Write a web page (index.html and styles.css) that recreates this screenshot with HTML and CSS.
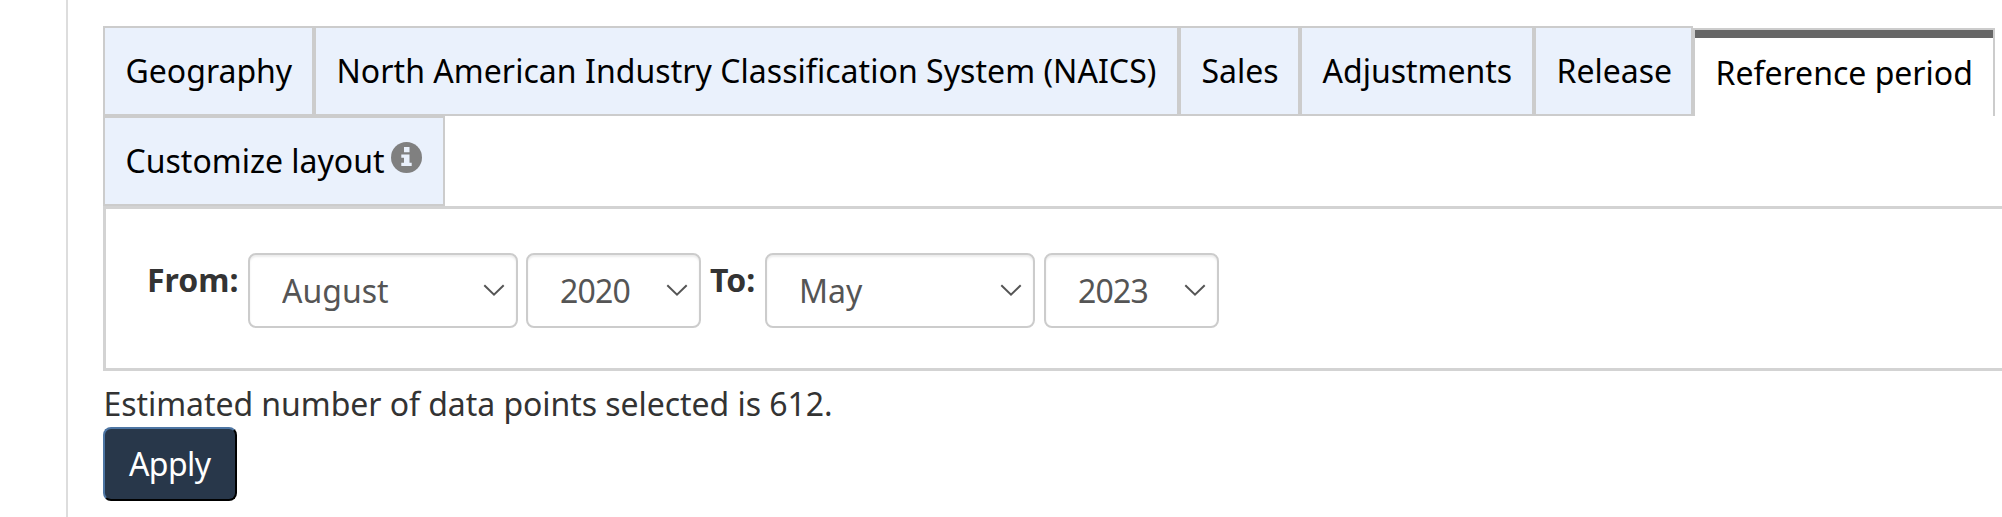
FILE: index.html
```html
<!DOCTYPE html>
<html lang="en">
<head>
<meta charset="utf-8">
<title>Reference period</title>
<link rel="stylesheet" href="styles.css">
</head>
<body>
<main class="page">
  <ul class="tabs">
    <li class="tab tab-geography"><span>Geography</span></li>
    <li class="tab tab-naics"><span>North American Industry Classification System (NAICS)</span></li>
    <li class="tab tab-sales"><span>Sales</span></li>
    <li class="tab tab-adjustments"><span>Adjustments</span></li>
    <li class="tab tab-release"><span>Release</span></li>
    <li class="tab tab-period active"><span>Reference period</span></li>
    <li class="tab tab-layout"><span>Customize layout</span>
      <svg class="info" viewBox="0 0 31 31"><circle cx="15.5" cy="15.5" r="15.5" fill="#808080"/><path fill="#eaf1fc" d="M13 5h5.500v5.300H13zM10.300 12.500h8.200v8.200h2.200v3.200H10.300v-3.200h2.700v-5h-2.700z"/></svg>
    </li>
  </ul>
  <section class="panel">
    <label class="label-from" for="fm">From:</label>
    <span class="field month"><select id="fm"><option>August</option></select><svg class="chevron" viewBox="0 0 22 13"><path d="M1.300 1.300 11 10.700l9.700-9.400"/></svg></span>
    <span class="field year"><select><option>2020</option></select><svg class="chevron" viewBox="0 0 22 13"><path d="M1.300 1.300 11 10.700l9.700-9.400"/></svg></span>
    <label class="label-to" for="tm">To:</label>
    <span class="field month to-month"><select id="tm"><option>May</option></select><svg class="chevron" viewBox="0 0 22 13"><path d="M1.300 1.300 11 10.700l9.700-9.400"/></svg></span>
    <span class="field year"><select><option>2023</option></select><svg class="chevron" viewBox="0 0 22 13"><path d="M1.300 1.300 11 10.700l9.700-9.400"/></svg></span>
  </section>
  <p class="estimate">Estimated number of data points selected is 612.</p>
  <button class="apply">Apply</button>
</main>
</body>
</html>
```
FILE: styles.css
```css
* { box-sizing: border-box; }
body {
  margin: 0;
  background: #fff;
  color: #333;
  font: 32px/44px "Noto Sans", sans-serif;
  overflow: hidden;
}
.page {
  margin-left: 66px;
  height: 517px;
  padding: 26px 0 0 35px;
  border-left: 2px solid #ddd;
}
.tabs {
  display: flex;
  flex-wrap: wrap;
  align-items: flex-end;
  margin: 0;
  padding: 0;
  list-style: none;
}
.tab {
  display: flex;
  height: 90px;
  padding: 21px 0 0 20.500px;
  border: 2px solid #ccc;
  background: #eaf1fc;
  color: #000;
  white-space: nowrap;
}
.tab-geography { width: 211px; }
.tab-naics { width: 865px; letter-spacing: .045px; }
.tab-sales { width: 121px; }
.tab-adjustments { width: 234px; }
.tab-release { width: 159px; }
.tab-period { width: 302px; }
.tab-layout { width: 342px; }
.tab.active {
  height: 88px;
  border-bottom: 0;
  background: #fff;
  box-shadow: inset 0 8px 0 #666;
}
.info {
  width: 31px;
  height: 31px;
  margin: 3px 0 0 6.500px;
}
.panel {
  display: flex;
  align-items: flex-start;
  height: 165px;
  padding: 44px 0 0 41px;
  border: 3px solid #d3d3d3;
  border-right: 0;
}
label {
  margin-top: 5px;
  font-weight: 700;
}
.label-from { width: 101px; }
.label-to { width: 55px; }
.field {
  position: relative;
  height: 75px;
}
.month { width: 270px; margin-right: 8px; }
.to-month { margin-right: 9px; }
.year { width: 175px; margin-right: 9px; }
select {
  appearance: none;
  width: 100%;
  height: 75px;
  padding: 0 0 0 32px;
  border: 2px solid #ccc;
  border-radius: 8px;
  background: #fff;
  box-shadow: inset 0 2px 2px rgba(0, 0, 0, .075);
  color: #555;
  font: inherit;
}
.year select { letter-spacing: -.8px; }
.chevron {
  position: absolute;
  top: 31px;
  right: 13px;
  width: 22px;
  height: 13px;
  fill: none;
  stroke: #555;
  stroke-width: 2;
}
.estimate {
  margin: 11px 0 1px .5px;
  letter-spacing: -.055px;
}
.apply {
  display: block;
  width: 134px;
  height: 74px;
  padding: 0 0 0 24px;
  border: 2px solid;
  border-color: #4d75a3 #000 #000 #4d75a3;
  border-radius: 8px;
  background: #28374a;
  color: #fff;
  font: inherit;
  letter-spacing: -.6px;
  text-align: left;
}
```
